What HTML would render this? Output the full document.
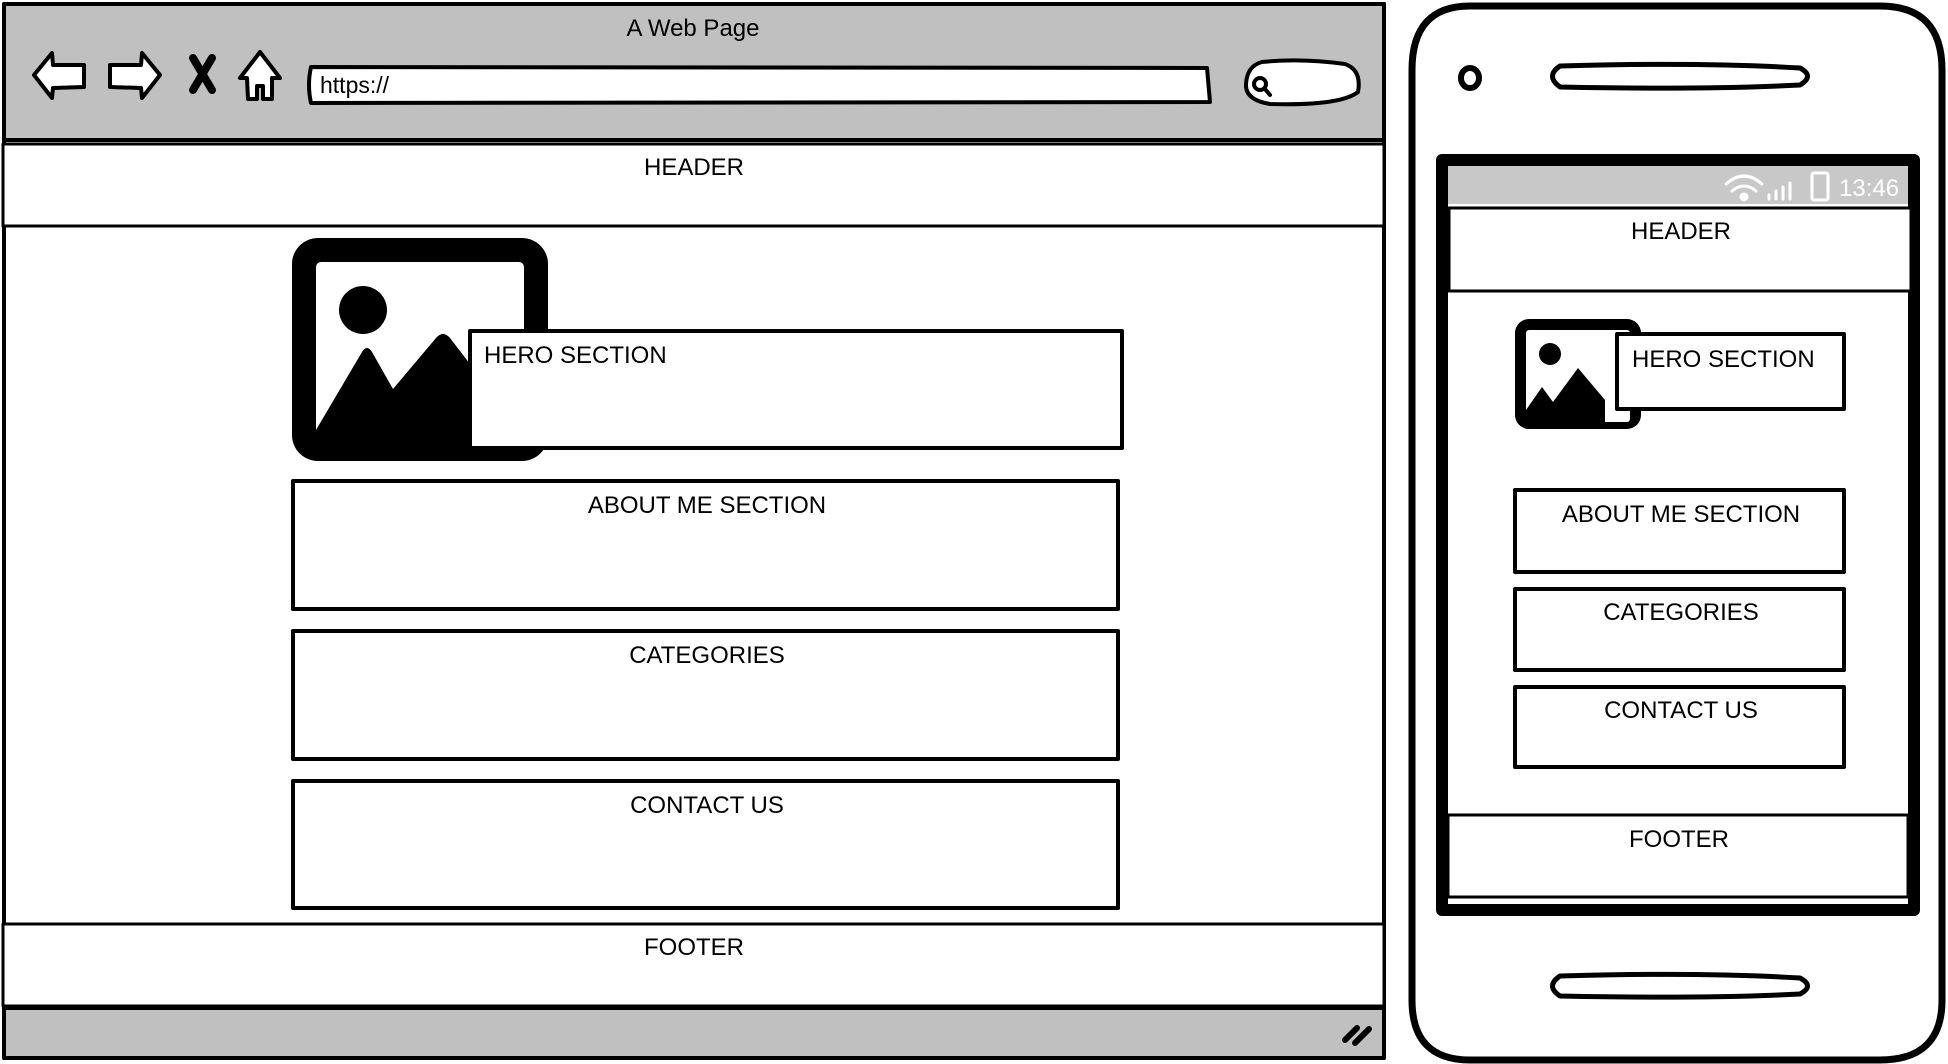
<!DOCTYPE html>
<html><head><meta charset="utf-8"><style>
html,body{margin:0;padding:0;background:#fff;width:1948px;height:1064px;overflow:hidden}
svg{display:block}
text{font-family:"Liberation Sans",sans-serif;fill:#000}
</style></head><body>
<svg width="1948" height="1064" viewBox="0 0 1948 1064" xmlns="http://www.w3.org/2000/svg">
<g stroke="#000" stroke-linejoin="round" stroke-linecap="round">
<!-- browser -->
<rect x="4" y="4" width="1380" height="1054" fill="#fff" stroke-width="4"/>
<rect x="4" y="4" width="1380" height="136" fill="#c0c0c0" stroke-width="4"/>
<rect x="4" y="1008" width="1380" height="50" fill="#c0c0c0" stroke-width="4"/>
<path d="M1345 1040 l12 -12 M1355 1043 l14 -14" stroke-width="6"/>
<!-- nav icons -->
<path d="M34 75 L52 53 L53 65 L84 65 L84 87 L53 88 L52 98 Z" fill="#fff" stroke-width="4"/>
<path d="M160 75 L142 53 L141 65 L110 65 L110 87 L141 88 L142 98 Z" fill="#fff" stroke-width="4"/>
<path d="M193 58 L212 90 M212 58 L193 90" stroke-width="8"/>
<path d="M260 52 L240 78 L247 78 L248 99 L257 99 L257 86 L263 86 L263 99 L272 99 L272 78 L280 78 Z" fill="#fff" stroke-width="4"/>
<path d="M311 67 L1207 68 L1210 102 L311 103 Q307 85 311 67 Z" fill="#fff" stroke-width="4"/>
<path d="M1262 62 Q1300 58 1345 64 Q1362 70 1358 92 Q1340 106 1270 104 Q1245 100 1246 84 Q1247 66 1262 62 Z" fill="#fff" stroke-width="4"/>
<circle cx="1260" cy="84" r="6" fill="none" stroke-width="4"/><path d="M1265 89 L1270 95" stroke-width="4"/>
<!-- header/footer -->
<rect x="3" y="144" width="1381" height="82" fill="#fff" stroke-width="3"/>
<rect x="3" y="924" width="1381" height="82" fill="#fff" stroke-width="3"/>
<!-- image -->
<rect x="292" y="238" width="256" height="223" rx="26" fill="#000" stroke="none"/>
<rect x="316" y="262" width="208" height="185" rx="5" fill="#fff" stroke="none"/>
<circle cx="363" cy="310" r="24" fill="#000" stroke="none"/>
<path d="M316 430 L362 352 Q367 344 372 352 L393 389 L436 338 Q443 330 450 338 L490 390 L490 461 L316 461 Z" fill="#000" stroke="none"/>
<rect x="470" y="331" width="652" height="117" fill="#fff" stroke-width="4"/>
<rect x="293" y="481" width="825" height="128" fill="#fff" stroke-width="4"/>
<rect x="293" y="631" width="825" height="128" fill="#fff" stroke-width="4"/>
<rect x="293" y="781" width="825" height="127" fill="#fff" stroke-width="4"/>
<!-- phone -->
<path d="M1470 6 L1880 6 Q1942 6 1942 70 L1942 1000 Q1942 1060 1880 1060 L1470 1060 Q1412 1060 1412 1000 L1412 70 Q1412 6 1470 6 Z" fill="#fff" stroke-width="7"/>
<ellipse cx="1470" cy="78" rx="9" ry="10" fill="none" stroke-width="6"/>
<path d="M1560 66 Q1700 62 1800 68 Q1815 76 1800 85 Q1700 90 1560 87 Q1545 76 1560 66 Z" fill="#fff" stroke-width="5"/>
<path d="M1560 976 Q1700 972 1800 978 Q1815 986 1800 994 Q1700 999 1560 996 Q1545 986 1560 976 Z" fill="#fff" stroke-width="5"/>
<rect x="1442" y="160" width="472" height="750" fill="#fff" stroke-width="12"/>
<rect x="1448" y="166" width="460" height="38" fill="#c8c8c8" stroke="none"/>
<rect x="1449" y="208" width="462" height="83" fill="#fff" stroke-width="3"/>
<rect x="1448" y="815" width="460" height="82" fill="#fff" stroke-width="3"/>
<rect x="1515" y="319" width="126" height="110" rx="14" fill="#000" stroke="none"/>
<rect x="1526" y="330" width="104" height="92" rx="3" fill="#fff" stroke="none"/>
<circle cx="1550" cy="354" r="11" fill="#000" stroke="none"/>
<path d="M1526 410 L1542 387 L1553 402 L1578 368 L1605 400 L1605 422 L1526 422 Z" fill="#000" stroke="none"/>
<rect x="1617" y="334" width="227" height="75" fill="#fff" stroke-width="4"/>
<rect x="1515" y="490" width="329" height="82" fill="#fff" stroke-width="4"/>
<rect x="1515" y="589" width="329" height="81" fill="#fff" stroke-width="4"/>
<rect x="1515" y="687" width="329" height="80" fill="#fff" stroke-width="4"/>
<!-- status icons -->
<g stroke="#fff" fill="none" stroke-width="3">
<path d="M1726 184 Q1744 168 1762 184 M1732 191 Q1744 181 1756 191"/>
<circle cx="1744" cy="197" r="3" fill="#fff"/>
<path d="M1769 199 v-4 M1776 199 v-8 M1783 199 v-12 M1790 199 v-16"/>
<rect x="1812" y="173" width="16" height="27" rx="2"/>
</g>
</g>
<text x="1839" y="196" font-size="24" style="fill:#fff">13:46</text>
<text x="693" y="36" font-size="24" text-anchor="middle">A Web Page</text>
<text x="320" y="93" font-size="23">https://</text>
<text x="694" y="175" font-size="24" text-anchor="middle">HEADER</text>
<text x="484" y="363" font-size="24">HERO SECTION</text>
<text x="707" y="513" font-size="24" text-anchor="middle">ABOUT ME SECTION</text>
<text x="707" y="663" font-size="24" text-anchor="middle">CATEGORIES</text>
<text x="707" y="813" font-size="24" text-anchor="middle">CONTACT US</text>
<text x="694" y="955" font-size="24" text-anchor="middle">FOOTER</text>
<text x="1681" y="239" font-size="24" text-anchor="middle">HEADER</text>
<text x="1632" y="367" font-size="24">HERO SECTION</text>
<text x="1681" y="522" font-size="24" text-anchor="middle">ABOUT ME SECTION</text>
<text x="1681" y="620" font-size="24" text-anchor="middle">CATEGORIES</text>
<text x="1681" y="718" font-size="24" text-anchor="middle">CONTACT US</text>
<text x="1679" y="847" font-size="24" text-anchor="middle">FOOTER</text>
</svg>
</body></html>
